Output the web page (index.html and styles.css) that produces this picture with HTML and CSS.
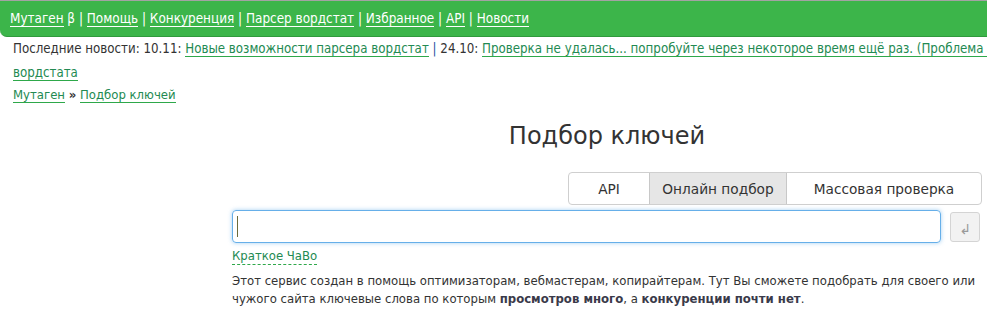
FILE: index.html
```html
<!DOCTYPE html>
<html lang="ru">
<head>
<meta charset="utf-8">
<title>Подбор ключей</title>
<link rel="stylesheet" href="styles.css">
</head>
<body>
<div class="page">
  <header class="topbar">
    <nav class="topnav">
      <a href="#">Мутаген</a> β | <a href="#">Помощь</a> | <a href="#">Конкуренция</a> | <a href="#">Парсер вордстат</a> | <a href="#">Избранное</a> | <a href="#">API</a> | <a href="#">Новости</a>
    </nav>
  </header>
  <div class="news-clip">
    <div class="news">Последние новости: 10.11: <a href="#">Новые возможности парсера вордстат</a> <span class="sep">|</span> 24.10: <a href="#">Проверка не удалась... попробуйте через некоторое время ещё раз. (Проблема с парсингом вордстата</a></div>
  </div>
  <div class="crumbs"><a href="#">Мутаген</a> <b>»</b> <a href="#">Подбор ключей</a></div>
  <div class="layout">
    <aside class="side"></aside>
    <main class="main">
      <h1 class="title">Подбор ключей</h1>
      <div class="tabs-row">
        <div class="tabs">
          <span class="tab tab-api">API</span>
          <span class="tab tab-online active">Онлайн подбор</span>
          <span class="tab tab-mass">Массовая проверка</span>
        </div>
      </div>
      <div class="search">
        <div class="input"><span class="caret"></span></div>
        <button class="go" type="button">↲</button>
      </div>
      <a class="faq" href="#">Краткое ЧаВо</a>
      <p class="intro">Этот сервис создан в помощь оптимизаторам, вебмастерам, копирайтерам. Тут Вы сможете подобрать для своего или чужого сайта ключевые слова по которым <b>просмотров много</b>, а <b>конкуренции почти нет</b>.</p>
    </main>
  </div>
</div>
</body>
</html>
```
FILE: styles.css
```css
html, body {
  margin: 0;
  padding: 0;
  overflow: hidden;
  background: #fff;
}
body {
  font-family: "DejaVu Sans Condensed", "DejaVu Sans", sans-serif;
  font-size: 13px;
  color: #333;
}
.page {
  width: 987px;
}
a {
  text-decoration: none;
}
.topbar {
  border-top: 1px solid #a3a3a3;
  background: #3cb54a;
  border-bottom: 1px solid #2f9a3c;
  border-bottom-left-radius: 7px;
  height: 35px;
  display: flex;
  align-items: center;
  padding-left: 10px;
  color: #fff;
  font-size: 13.4px;
}
.topnav a {
  color: #fff;
  border-bottom: 1px solid #fff;
}
.news-clip {
  width: 987px;
  overflow: hidden;
}
.news {
  width: 1090px;
  padding: 0 0 0 13px;
  line-height: 24px;
  font-size: 13.2px;
}
.news a, .crumbs a {
  color: #238a52;
  border-bottom: 1px solid #2ea84a;
}
.news .sep {
  color: #1f4fa0;
}
.crumbs {
  padding-left: 13px;
  line-height: 20px;
}
.layout {
  display: flex;
}
.side {
  width: 232px;
  flex: none;
}
.main {
  width: 750px;
}
.title {
  margin: 16px 0 0 0;
  text-align: center;
  font-weight: normal;
  font-size: 24px;
  line-height: 30px;
  color: #333;
  font-family: "DejaVu Sans", sans-serif;
}
.tabs-row {
  display: flex;
  justify-content: flex-end;
  margin-top: 21px;
}
.tabs {
  display: flex;
  border: 1px solid #cfcfcf;
  border-radius: 4px;
  height: 31px;
  overflow: hidden;
}
.tab {
  display: flex;
  align-items: center;
  justify-content: center;
  font-size: 13.7px;
  color: #333;
  font-family: "DejaVu Sans", sans-serif;
}
.tab-api { width: 80px; }
.tab-online { width: 136px; border-left: 1px solid #c8c8c8; border-right: 1px solid #c8c8c8; }
.tab-mass { width: 194px; }
.tab.active { background: #e6e6e6; }
.search {
  display: flex;
  align-items: center;
  margin-top: 5px;
  padding-right: 2px;
}
.input {
  flex: 1;
  height: 31px;
  border: 1px solid #66afe9;
  border-radius: 4px;
  box-shadow: 0 0 4px rgba(102, 175, 233, 0.6);
  display: flex;
  align-items: center;
  padding-left: 4px;
}
.caret {
  width: 1px;
  height: 21px;
  background: #6b6b3a;
}
.go {
  flex: none;
  margin-left: 9px;
  width: 30px;
  height: 30px;
  box-sizing: border-box;
  background: #f2f2f2;
  border: 1px solid #d4d4d4;
  border-radius: 3px;
  color: #9a9a9a;
  font-size: 14px;
  padding: 4px 0 0 0;
  font-family: "DejaVu Sans", sans-serif;
}
.faq {
  display: block;
  width: fit-content;
  margin-top: 5px;
  color: #238a52;
  border-bottom: 1px dashed #2ea84a;
  line-height: 16px;
}
.intro {
  margin: 7px 0 0 0;
  line-height: 18px;
  width: 750px;
}
.intro b {
  color: #3a3a4a;
}
```
